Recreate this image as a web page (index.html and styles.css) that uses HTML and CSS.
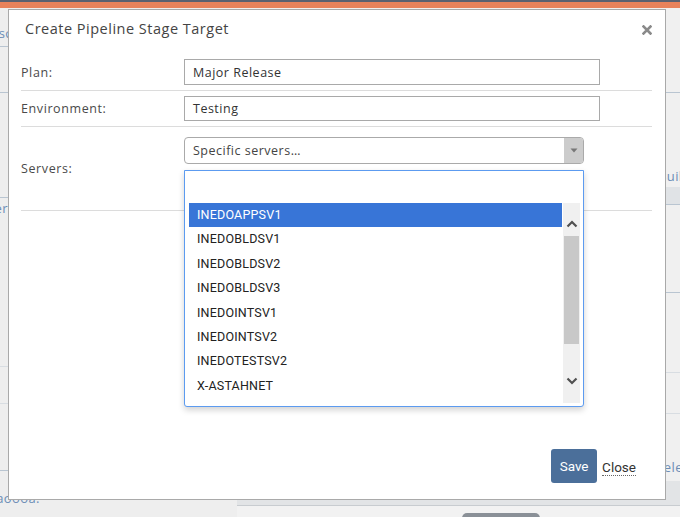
FILE: index.html
```html
<!DOCTYPE html>
<html>
<head>
<meta charset="utf-8">
<link rel="stylesheet" href="styles.css">
</head>
<body>
<div class="topbar"></div>
<div class="page">
  <div class="col-left">
    <div class="blk b1"><span class="lnk">Pipelines sc</span></div>
    <div class="blk b2"></div>
    <div class="blk b3"></div>
    <div class="blk b4"><span class="lnk">Filter</span></div>
    <div class="blk b5"></div>
    <div class="blk b6"></div>
    <div class="blk b7"><span class="lnk">Last aoooa.</span></div>
  </div>
  <div class="col-right">
    <div class="blk r1"></div>
    <div class="blk r2"><span class="lnk">Build</span></div>
    <div class="blk r3"></div>
    <div class="blk r4"></div>
    <div class="blk r5"></div>
    <div class="blk r6"></div>
    <div class="blk r7"><span class="lnk">Delete</span></div>
    <div class="blk r8"></div>
    <div class="r9"><span class="grey-btn"></span></div>
  </div>
</div>

<div class="modal">
  <div class="modal-header">
    <h2 class="modal-title">Create Pipeline Stage Target</h2>
    <svg class="close-x" width="10" height="10" viewBox="0 0 10 10"><path d="M1.5 1.5 L8.5 8.5 M8.5 1.5 L1.5 8.5" stroke="#8a8a8a" stroke-width="2.6" stroke-linecap="square"/></svg>
  </div>
  <div class="form">
    <div class="row">
      <label class="lbl">Plan:</label>
      <div class="field"><div class="input h26">Major Release</div></div>
    </div>
    <div class="row">
      <label class="lbl">Environment:</label>
      <div class="field"><div class="input h25">Testing</div></div>
    </div>
    <div class="row row-servers">
      <label class="lbl">Servers:</label>
      <div class="field">
        <div class="select">
          <span class="select-text">Specific servers…</span>
          <span class="select-arrow"><svg width="8" height="5" viewBox="0 0 8 5"><path d="M0.5 0.5 H7.5 L4 4.5 Z" fill="#777"/></svg></span>
        </div>
        <div class="spacer"></div>
        <div class="dropdown">
          <div class="search"></div>
          <div class="listbox">
            <div class="items">
              <div class="item active">INEDOAPPSV1</div>
              <div class="item">INEDOBLDSV1</div>
              <div class="item">INEDOBLDSV2</div>
              <div class="item">INEDOBLDSV3</div>
              <div class="item">INEDOINTSV1</div>
              <div class="item">INEDOINTSV2</div>
              <div class="item">INEDOTESTSV2</div>
              <div class="item">X-ASTAHNET</div>
              <div class="item">X-BUILDSV1</div>
            </div>
            <div class="scrollbar">
              <svg class="chev chev-up" width="12" height="8" viewBox="0 0 12 8"><path d="M1.5 6.5 L6 2 L10.5 6.5" fill="none" stroke="#505050" stroke-width="2.2"/></svg>
              <div class="track"><div class="thumb"></div></div>
              <svg class="chev chev-down" width="12" height="8" viewBox="0 0 12 8"><path d="M1.5 1.5 L6 6 L10.5 1.5" fill="none" stroke="#505050" stroke-width="2.2"/></svg>
            </div>
          </div>
        </div>
      </div>
    </div>
  </div>
  <div class="modal-footer">
    <button class="btn-save">Save</button>
    <span class="btn-close">Close</span>
  </div>
</div>
</body>
</html>
```
FILE: styles.css
```css
html, body {
  margin: 0;
  padding: 0;
}
body {
  width: 680px;
  height: 517px;
  overflow: hidden;
  background: #f0f0f0;
  font-family: "Open Sans", Lato, sans-serif;
  position: relative;
}
.topbar {
  height: 6px;
  border-top: 2px solid #5a6170;
  background: #e8825b;
}
.page {
  display: grid;
  grid-template-columns: 237px 1fr;
  height: 509px;
}
.col-left {
  background: #eeeeee;
  display: flex;
  flex-direction: column;
}
.col-right {
  background: #f0f0f0;
  display: flex;
  flex-direction: column;
}
.blk {
  box-sizing: border-box;
  border-bottom: 1px solid #b9c5d1;
  position: relative;
}
.lnk {
  color: #6c8db6;
  font-size: 13px;
  letter-spacing: 0.4px;
  white-space: nowrap;
  position: absolute;
}
.b1 { height: 39px; }
.b1 .lnk { right: 225px; top: 16px; }
.b2 { height: 46px; }
.b3 { height: 105px; }
.b4 { height: 169px; border-bottom-color: #d8dde2; }
.b4 .lnk { right: 229px; top: 1px; }
.b5 { height: 37px; border-bottom-color: #d8dde2; }
.b6 { height: 67px; }
.b7 { height: 40px; border-bottom: none; }
.b7 .lnk { left: -34px; top: 18px; }

.r1 { height: 85px; }
.r2 { height: 94px; border-bottom: none; }
.r2 .lnk { left: 421px; top: 74px; }
.r3 { height: 18px; background: #e0e3e6; }
.r4 { height: 88px; }
.r5 { height: 80px; border-bottom-color: #d8dde2; }
.r6 { height: 41px; border-bottom-color: #d8dde2; }
.r7 { height: 67px; border-bottom: none; }
.r7 .lnk { left: 417px; top: 44px; }
.r8 { height: 25px; background: #e2e4e6; border-bottom: 1px solid #c8ccd0; }
.r9 { flex: 1; position: relative; background: #f2f2f2; }
.grey-btn {
  position: absolute;
  left: 225px;
  top: 7px;
  width: 78px;
  height: 20px;
  border-radius: 5px;
  background: #8a9097;
}

/* Modal */
.modal {
  position: absolute;
  left: 8px;
  top: 9px;
  width: 658px;
  height: 491px;
  box-sizing: border-box;
  background: #fff;
  border: 1px solid #a9a9a9;
  display: flex;
  flex-direction: column;
}
.modal-header {
  display: flex;
  align-items: center;
  justify-content: space-between;
  height: 37px;
  padding: 0 13px 0 16px;
  margin-bottom: 3px;
}
.modal-title {
  margin: 0;
  font-size: 14.5px;
  font-weight: normal;
  letter-spacing: 0.5px;
  color: #444;
}
.close-x { display: block; margin-top: 3px; }

.form {
  margin: 4px 13px 0 12px;
}
.row {
  display: flex;
  align-items: center;
  border-bottom: 1px solid #dcdcdc;
  padding: 5px 0;
}
.lbl {
  width: 163px;
  flex: none;
  font-size: 12.5px;
  letter-spacing: 0.6px;
  color: #4a4a4a;
}
.field {
  position: relative;
  width: 416px;
}
.input {
  box-sizing: border-box;
  border: 1px solid #a9a9a9;
  padding: 0 8px;
  font-size: 12.5px;
  letter-spacing: 0.5px;
  color: #333;
  display: flex;
  align-items: center;
}
.h26 { height: 26px; }
.h25 { height: 25px; }
.row-servers { padding: 10px 0; }
.row-servers .field { width: 400px; }
.select {
  box-sizing: border-box;
  height: 27px;
  border: 1px solid #aaa;
  border-radius: 4px;
  display: flex;
  align-items: center;
  background: #fff;
  overflow: hidden;
}
.select-text {
  flex: 1;
  padding-left: 8px;
  font-size: 12.5px;
  letter-spacing: 0.5px;
  color: #444;
}
.select-arrow {
  width: 19px;
  align-self: stretch;
  background: #cccccc;
  display: flex;
  align-items: center;
  justify-content: center;
}
.select-arrow svg { display: block; }
.spacer { height: 36px; }
.dropdown {
  position: absolute;
  left: 0;
  top: 33px;
  width: 400px;
  box-sizing: border-box;
  border: 1px solid #5c9bf0;
  border-radius: 0 0 3px 3px;
  background: #fff;
  padding: 0 3px 3px 4px;
  box-shadow: 0 3px 6px rgba(0,0,0,0.18);
  z-index: 2;
}
.search { height: 32px; }
.listbox {
  display: flex;
  height: 200px;
  overflow: hidden;
}
.items {
  flex: 1;
  font-family: Roboto, "Liberation Sans", sans-serif;
  font-size: 12.5px;
  letter-spacing: 0.2px;
  color: #222;
}
.item {
  height: 24.4px;
  line-height: 24.4px;
  padding-left: 8px;
  margin-right: 1px;
}
.item.active {
  background: #3875d7;
  color: #fff;
}
.scrollbar {
  width: 17px;
  background: #f0f0f0;
  display: flex;
  flex-direction: column;
  align-items: center;
}
.chev { display: block; flex: none; }
.chev-up { margin: 17px 0 0; }
.chev-down { margin: 0 0 18px; }
.track { flex: 1; width: 15px; }
.thumb {
  margin-top: 8px;
  height: 108px;
  background: #c8c8c8;
}

.modal-footer {
  margin-top: auto;
  display: flex;
  align-items: center;
  justify-content: flex-end;
  padding: 0 29px 16px 0;
  gap: 5px;
}
.btn-save {
  height: 34px;
  width: 46px;
  border: none;
  border-radius: 3px;
  background: #4b6f9a;
  color: #fff;
  font-family: Roboto, "Liberation Sans", sans-serif;
  font-size: 13.5px;
  padding: 0;
}
.btn-close {
  font-family: Roboto, "Liberation Sans", sans-serif;
  font-size: 13.5px;
  color: #333;
  border-bottom: 1px dotted #666;
  line-height: 16px;
  margin-top: 2px;
}
```
